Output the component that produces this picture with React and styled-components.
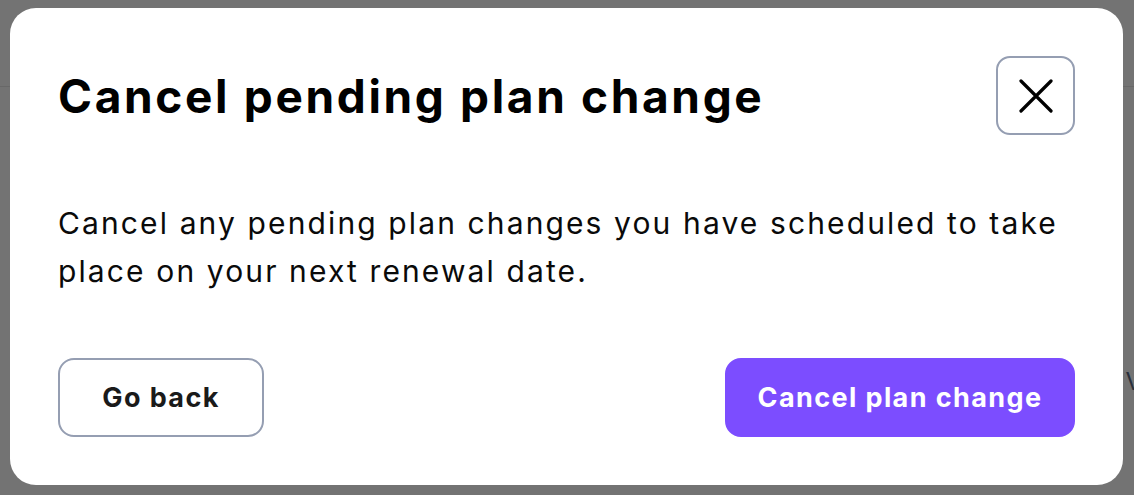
import React from "react";
import styled, { createGlobalStyle } from "styled-components";

const Global = createGlobalStyle`
  html, body { margin: 0; padding: 0; }
  body {
    width: 1134px;
    height: 495px;
    overflow: hidden;
    background: #ffffff;
    font-family: "Inter", "Noto Sans", sans-serif;
  }
  * { box-sizing: border-box; }
`;

const Page = styled.div`
  width: 1134px;
  height: 495px;
  display: flex;
  flex-direction: column;
`;

const PageHeader = styled.header`
  height: 87px;
  border-bottom: 1px solid #e6e6e6;
  flex-shrink: 0;
`;

const PageMain = styled.main`
  flex: 1;
  display: flex;
  justify-content: flex-end;
  padding-top: 280px;
`;

const PageText = styled.span`
  font-family: "Inter", sans-serif;
  font-size: 24px;
  color: #5d6b85;
  margin-right: -8px;
`;

const Overlay = styled.div`
  position: fixed;
  inset: 0;
  background: rgba(0, 0, 0, 0.55);
  padding: 8px 11px 10px 10px;
  display: flex;
`;

const Modal = styled.div`
  flex: 1;
  background: #ffffff;
  border-radius: 26px;
  padding: 48px;
  display: flex;
  flex-direction: column;
`;

const Header = styled.div`
  display: flex;
  align-items: center;
  justify-content: space-between;
`;

const Title = styled.h2`
  margin: 0;
  font-family: "Inter", sans-serif;
  font-weight: 700;
  font-size: 46px;
  letter-spacing: 2.65px;
  color: #000000;
`;

const CloseButton = styled.button`
  width: 79px;
  height: 79px;
  border: 2px solid #959eb2;
  border-radius: 14px;
  background: #ffffff;
  display: flex;
  align-items: center;
  justify-content: center;
  padding: 0;
  cursor: pointer;
`;

const Body = styled.p`
  margin: 64px 0 0 0;
  font-family: "Inter", sans-serif;
  font-weight: 400;
  font-size: 30px;
  letter-spacing: 2.12px;
  line-height: 48px;
  color: #0a0a0a;
`;

const Footer = styled.div`
  margin-top: auto;
  display: flex;
  justify-content: space-between;
  align-items: center;
`;

const Button = styled.button`
  height: 79px;
  border-radius: 16px;
  font-family: "Inter", sans-serif;
  font-weight: 700;
  font-size: 27px;
  letter-spacing: 1.4px;
  cursor: pointer;
  padding: 0 24px;
  border: 2px solid ${(p) => (p.$primary ? "#7c4dff" : "#959eb2")};
  background: ${(p) => (p.$primary ? "#7c4dff" : "#ffffff")};
  color: ${(p) => (p.$primary ? "#ffffff" : "#1a1a1a")};
  width: ${(p) => p.$width}px;
`;

export default function App() {
  return (
    <>
      <Global />
      <Page>
        <PageHeader />
        <PageMain>
          <PageText>V</PageText>
        </PageMain>
      </Page>
      <Overlay>
        <Modal role="dialog">
          <Header>
            <Title>Cancel pending plan change</Title>
            <CloseButton aria-label="Close">
              <svg width="34" height="34" viewBox="0 0 34 34" fill="none">
                <path
                  d="M2 2L32 32M32 2L2 32"
                  stroke="#000"
                  strokeWidth="3.2"
                  strokeLinecap="round"
                />
              </svg>
            </CloseButton>
          </Header>
          <Body>
            Cancel any pending plan changes you have scheduled to take
            <br />
            place on your next renewal date.
          </Body>
          <Footer>
            <Button $width={206}>Go back</Button>
            <Button $primary $width={350}>Cancel plan change</Button>
          </Footer>
        </Modal>
      </Overlay>
    </>
  );
}
